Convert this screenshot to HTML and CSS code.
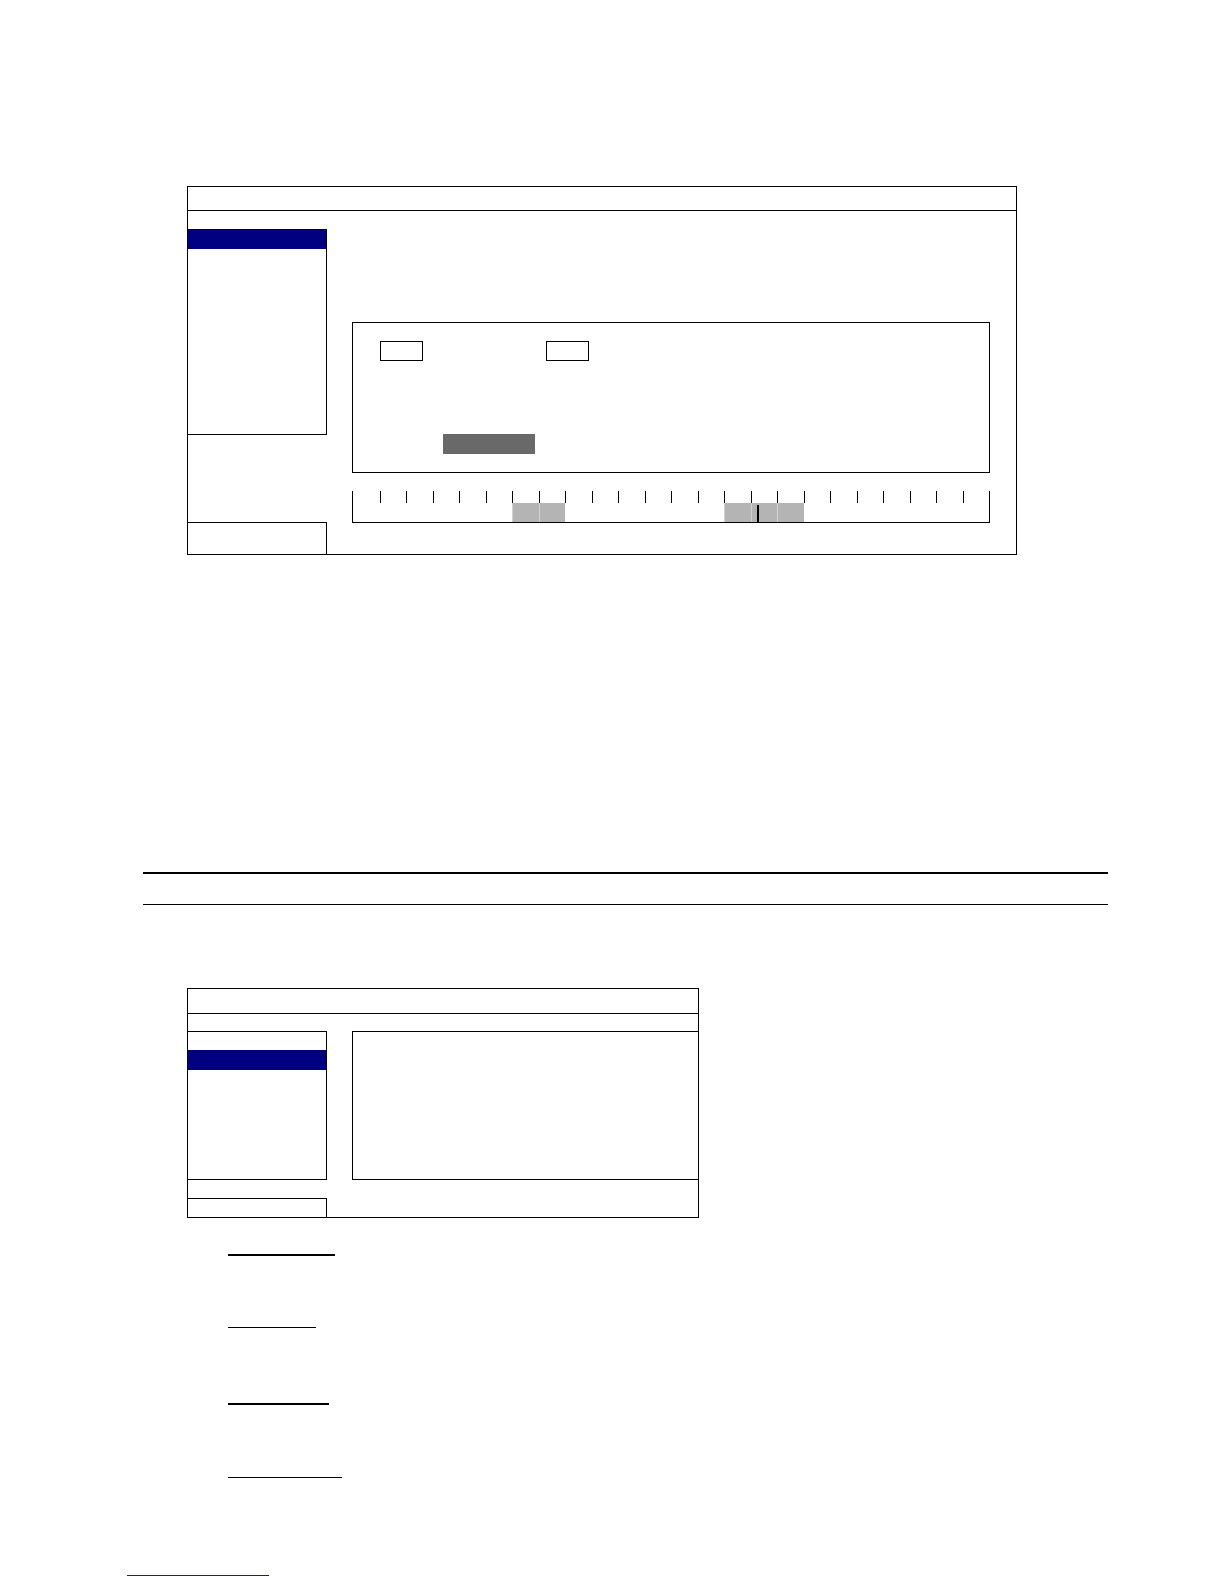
FILE: index.html
```html
<!DOCTYPE html>
<html lang="en">
<head>
<meta charset="utf-8">
<title>Record schedule</title>
<link rel="stylesheet" href="styles.css">
</head>
<body>
<div class="page">
  <section class="panel panel-a">
    <div class="titlebar titlebar-a"></div>
    <div class="panel-body">
      <div class="side">
        <div class="menu menu-a"><div class="sel sel-a"></div></div>
        <div class="foot foot-a"></div>
      </div>
      <div class="content content-a">
        <div class="inner">
          <div class="fields">
            <div class="field"></div>
            <div class="field field-gap"></div>
          </div>
          <div class="btn"></div>
        </div>
        <div class="timeline">
          <div class="hour"><div class="tick"></div><div class="bar"></div></div>
          <div class="hour"><div class="tick"></div><div class="bar"></div></div>
          <div class="hour"><div class="tick"></div><div class="bar"></div></div>
          <div class="hour"><div class="tick"></div><div class="bar"></div></div>
          <div class="hour"><div class="tick"></div><div class="bar"></div></div>
          <div class="hour"><div class="tick"></div><div class="bar"></div></div>
          <div class="hour"><div class="tick"></div><div class="bar on"></div></div>
          <div class="hour"><div class="tick"></div><div class="bar on"></div></div>
          <div class="hour"><div class="tick"></div><div class="bar"></div></div>
          <div class="hour"><div class="tick"></div><div class="bar"></div></div>
          <div class="hour"><div class="tick"></div><div class="bar"></div></div>
          <div class="hour"><div class="tick"></div><div class="bar"></div></div>
          <div class="hour"><div class="tick"></div><div class="bar"></div></div>
          <div class="hour"><div class="tick"></div><div class="bar"></div></div>
          <div class="hour"><div class="tick"></div><div class="bar on"></div></div>
          <div class="hour"><div class="tick"></div><div class="bar on"></div><div class="marker"></div></div>
          <div class="hour"><div class="tick"></div><div class="bar on"></div></div>
          <div class="hour"><div class="tick"></div><div class="bar"></div></div>
          <div class="hour"><div class="tick"></div><div class="bar"></div></div>
          <div class="hour"><div class="tick"></div><div class="bar"></div></div>
          <div class="hour"><div class="tick"></div><div class="bar"></div></div>
          <div class="hour"><div class="tick"></div><div class="bar"></div></div>
          <div class="hour"><div class="tick"></div><div class="bar"></div></div>
          <div class="hour"><div class="tick"></div><div class="bar"></div></div>
        </div>
      </div>
    </div>
  </section>

  <div class="rule rule-thick"></div>
  <div class="rule rule-thin"></div>

  <section class="panel panel-b">
    <div class="titlebar titlebar-b"></div>
    <div class="panel-body">
      <div class="side">
        <div class="menu menu-b"><div class="sel sel-b"></div></div>
        <div class="foot foot-b"></div>
      </div>
      <div class="content content-b">
        <div class="listbox"></div>
      </div>
    </div>
  </section>

  <div class="uline u1"></div>
  <div class="uline u2"></div>
  <div class="uline u3"></div>
  <div class="uline u4"></div>

  <div class="link"></div>
</div>
</body>
</html>
```

FILE: styles.css
```css
html, body {
  margin: 0;
  padding: 0;
  background: #fff;
  font-family: "Liberation Sans", Arial, sans-serif;
}

.page {
  width: 1224px;
  height: 1584px;
  box-sizing: border-box;
  padding-top: 186px;
  overflow: hidden;
}

.panel {
  margin-left: 187px;
  border: 1px solid #000;
  box-sizing: border-box;
  display: flex;
  flex-direction: column;
}

.panel-a { width: 830px; height: 369px; }
.panel-b { width: 512px; height: 230px; margin-top: 83px; }

.titlebar {
  border-bottom: 1px solid #000;
  box-sizing: border-box;
  flex: none;
}
.titlebar-a { height: 24px; }
.titlebar-b { height: 25px; }

.panel-body {
  flex: 1;
  display: flex;
  min-height: 0;
}

.side {
  width: 139px;
  flex: none;
  display: flex;
  flex-direction: column;
  justify-content: space-between;
}

.menu {
  border-top: 1px solid #000;
  border-right: 1px solid #000;
  border-bottom: 1px solid #000;
  box-sizing: border-box;
}
.menu-a { margin-top: 18px; height: 206px; }
.menu-b { margin-top: 17px; height: 149px; padding-top: 18px; }

.sel { background: #000080; }
.sel-a { height: 19px; }
.sel-b { height: 20px; }

.foot {
  border-top: 1px solid #000;
  border-right: 1px solid #000;
  box-sizing: border-box;
}
.foot-a { height: 32px; }
.foot-b { height: 19px; }

.content { flex: 1; }
.content-a { padding: 111px 0 0 25px; }
.content-b { padding: 17px 0 0 25px; }

.inner {
  width: 638px;
  height: 151px;
  border: 1px solid #000;
  box-sizing: border-box;
  padding: 18px 0 0 27px;
}

.fields { display: flex; }

.field {
  width: 43px;
  height: 20px;
  border: 1px solid #000;
  box-sizing: border-box;
}
.field-gap { margin-left: 123px; }

.btn {
  margin: 73px 0 0 63px;
  width: 92px;
  height: 20px;
  background: #696969;
}

.timeline {
  margin-top: 18px;
  width: 638px;
  height: 32px;
  border: 1px solid #000;
  border-top: none;
  box-sizing: border-box;
  display: flex;
}

.hour {
  flex: 1;
  display: flex;
  flex-direction: column;
  position: relative;
}

.tick { height: 12px; flex: none; }
.hour + .hour .tick { border-left: 1px solid #000; }

.bar { flex: 1; }
.bar.on {
  background: #b4b4b4;
  border-left: 1px solid #d2d2d2;
}

.marker {
  position: absolute;
  left: 6px;
  top: 14px;
  width: 2px;
  height: 17px;
  background: #000;
}

.rule {
  margin-left: 143px;
  width: 965px;
  background: #000;
}
.rule-thick { margin-top: 317px; height: 2px; }
.rule-thin { margin-top: 30px; height: 1px; }

.listbox {
  height: 149px;
  border-top: 1px solid #000;
  border-left: 1px solid #000;
  border-bottom: 1px solid #000;
  box-sizing: border-box;
}

.uline {
  margin-left: 228px;
  background: #000;
}
.u1 { margin-top: 36px; width: 107px; height: 2px; }
.u2 { margin-top: 71px; width: 88px; height: 1px; }
.u3 { margin-top: 75px; width: 101px; height: 2px; }
.u4 { margin-top: 72px; width: 114px; height: 1px; }

.link {
  margin: 97px 0 0 127px;
  width: 142px;
  height: 1px;
  background: #1a1a99;
}
```
